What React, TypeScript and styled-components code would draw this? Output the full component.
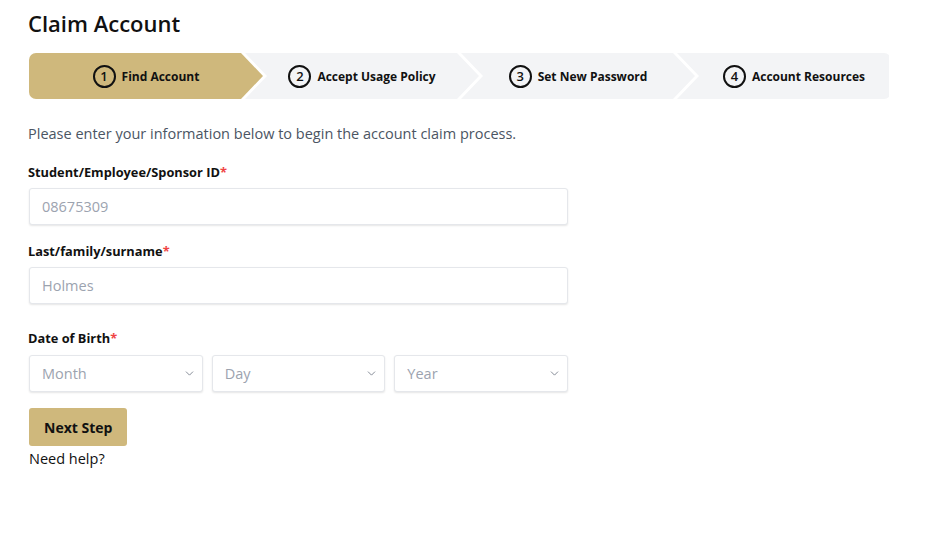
import { createGlobalStyle } from 'styled-components'
import styled from 'styled-components'
import { ChevronDown } from 'lucide-react'

const GlobalStyle = createGlobalStyle`
  body {
    margin: 0;
    background: #fff;
    font-family: "Open Sans", "Noto Sans", sans-serif;
    color: #111827;
  }
  * {
    box-sizing: border-box;
  }
`

const Page = styled.div`
  padding: 7px 28px 40px 28px;
`

const Title = styled.h1`
  margin: 0 0 14px 0;
  font-size: 22px;
  line-height: 32px;
  font-weight: 600;
  color: #111;
`

const Stepper = styled.div`
  display: flex;
  width: 862px;
  height: 46px;
  margin-left: 1px;
  border-radius: 7px;
  overflow: hidden;
  background: #fff;
`

const Step = styled.div<{ $active?: boolean; $pos: 'first' | 'mid' | 'last' }>`
  flex: ${(p) => (p.$pos === 'last' ? '0 0 212px' : '0 0 234px')};
  min-width: 0;
  margin-left: ${(p) => (p.$pos === 'first' ? '0' : '-18px')};
  padding: 0 ${(p) => (p.$pos === 'last' ? '0' : '22px')} 0 22px;
  display: flex;
  align-items: center;
  justify-content: center;
  gap: 6px;
  white-space: nowrap;
  background: ${(p) => (p.$active ? '#cfb87c' : '#f3f4f6')};
  font-size: 12px;
  font-weight: 700;
  color: #111;
  clip-path: ${(p) =>
    p.$pos === 'first'
      ? 'polygon(0 0, calc(100% - 22px) 0, 100% 50%, calc(100% - 22px) 100%, 0 100%)'
      : p.$pos === 'mid'
      ? 'polygon(0 0, calc(100% - 22px) 0, 100% 50%, calc(100% - 22px) 100%, 0 100%, 22px 50%)'
      : 'polygon(0 0, 100% 0, 100% 100%, 0 100%, 22px 50%)'};
`

const StepNumber = styled.span`
  display: inline-flex;
  align-items: center;
  justify-content: center;
  width: 23px;
  height: 23px;
  border: 2px solid #111;
  border-radius: 50%;
  font-size: 13px;
  font-weight: 600;
  line-height: 1;
`

const Intro = styled.p`
  margin: 24px 0 18px 0;
  font-size: 14.5px;
  line-height: 22px;
  color: #4b5563;
`

const Form = styled.form`
  width: 539px;
  margin-left: 1px;
`

const Label = styled.label<{ $gap?: number }>`
  display: block;
  margin: 0 0 ${(p) => p.$gap ?? 7}px -1px;
  font-size: 12.8px;
  line-height: 18px;
  font-weight: 700;
  color: #111;
`

const Required = styled.span`
  color: #ef4444;
`

const Field = styled.div<{ $space: number }>`
  margin-bottom: ${(p) => p.$space}px;
`

const TextInput = styled.input`
  display: block;
  width: 100%;
  height: 37px;
  padding: 0 12px;
  border: 1px solid #e5e7eb;
  border-radius: 3px;
  box-shadow: 0 1px 2px rgba(0, 0, 0, 0.1);
  font-family: inherit;
  font-size: 14.5px;
  color: #111;
  &::placeholder {
    color: #9ca3af;
  }
`

const SelectRow = styled.div`
  display: grid;
  grid-template-columns: 1fr 1fr 1fr;
  gap: 9px;
`

const SelectWrap = styled.div`
  position: relative;
  svg {
    position: absolute;
    right: 7px;
    top: 12px;
    color: #6b7280;
    pointer-events: none;
  }
`

const Select = styled.select`
  appearance: none;
  display: block;
  width: 100%;
  height: 37px;
  padding: 0 12px;
  border: 1px solid #e5e7eb;
  border-radius: 3px;
  box-shadow: 0 1px 2px rgba(0, 0, 0, 0.1);
  background: #fff;
  font-family: inherit;
  font-size: 14.5px;
  color: #9ca3af;
`

const Button = styled.button`
  display: block;
  height: 38px;
  padding: 0 15px;
  border: none;
  border-radius: 3px;
  background: #cfb87c;
  font-family: inherit;
  font-size: 14px;
  font-weight: 700;
  color: #111;
`

const Help = styled.div`
  margin-top: 2px;
  font-size: 14.5px;
  line-height: 22px;
  color: #111;
`

const steps = ['Find Account', 'Accept Usage Policy', 'Set New Password', 'Account Resources']

function DateSelect({ label }: { label: string }) {
  return (
    <SelectWrap>
      <Select defaultValue="">
        <option value="" disabled>
          {label}
        </option>
      </Select>
      <ChevronDown size={13} strokeWidth={1.5} />
    </SelectWrap>
  )
}

export default function App() {
  return (
    <Page>
      <GlobalStyle />
      <Title>Claim Account</Title>
      <Stepper>
        {steps.map((s, i) => (
          <Step key={s} $active={i === 0} $pos={i === 0 ? 'first' : i === steps.length - 1 ? 'last' : 'mid'}>
            <StepNumber>{i + 1}</StepNumber>
            {s}
          </Step>
        ))}
      </Stepper>
      <Intro>Please enter your information below to begin the account claim process.</Intro>
      <Form>
        <Field $space={17}>
          <Label>
            Student/Employee/Sponsor ID<Required>*</Required>
          </Label>
          <TextInput placeholder="08675309" />
        </Field>
        <Field $space={25}>
          <Label>
            Last/family/surname<Required>*</Required>
          </Label>
          <TextInput placeholder="Holmes" />
        </Field>
        <Field $space={16}>
          <Label $gap={8}>
            Date of Birth<Required>*</Required>
          </Label>
          <SelectRow>
            <DateSelect label="Month" />
            <DateSelect label="Day" />
            <DateSelect label="Year" />
          </SelectRow>
        </Field>
        <Button type="button">Next Step</Button>
        <Help>Need help?</Help>
      </Form>
    </Page>
  )
}
